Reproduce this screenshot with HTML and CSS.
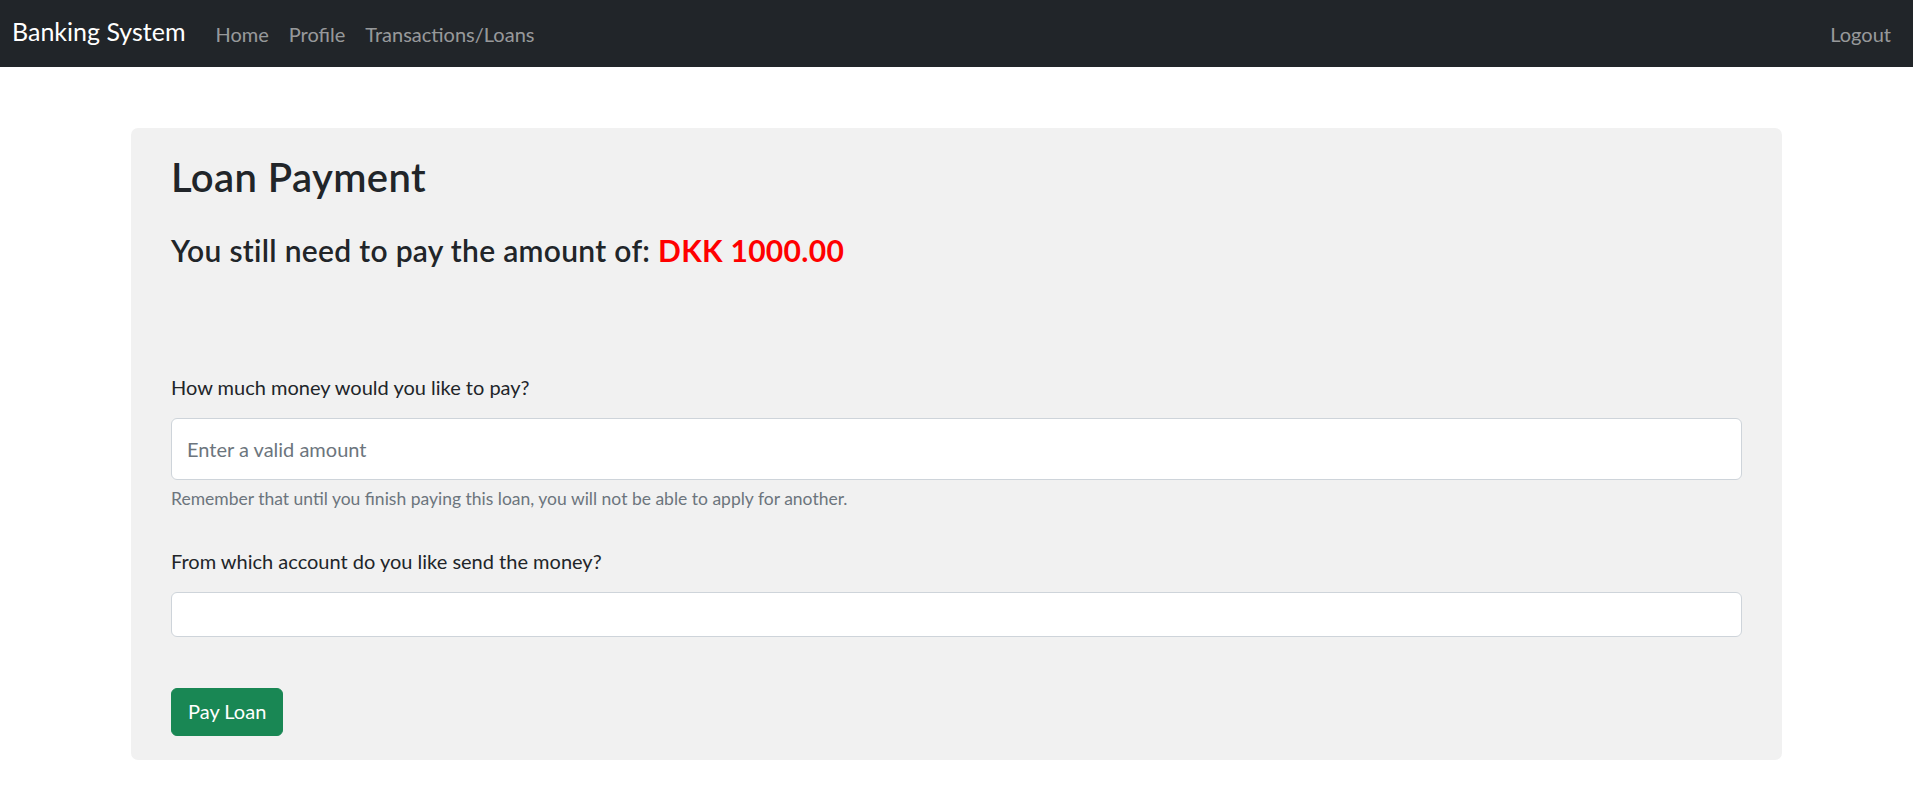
FILE: index.html
```html
<!DOCTYPE html>
<html lang="en">
<head>
<meta charset="utf-8">
<title>Loan Payment</title>
<link rel="stylesheet" href="styles.css">
</head>
<body>
<nav class="navbar">
  <a class="brand" href="#">Banking System</a>
  <div class="nav-links">
    <a class="nav-link" href="#">Home</a>
    <a class="nav-link" href="#">Profile</a>
    <a class="nav-link" href="#">Transactions/Loans</a>
  </div>
  <a class="nav-link logout" href="#">Logout</a>
</nav>
<main class="container">
  <section class="card">
    <h2 class="title">Loan Payment</h2>
    <h4 class="subtitle">You still need to pay the amount of: <span class="amount">DKK 1000.00</span></h4>
    <form class="form">
      <div class="group">
        <label class="label" for="amount">How much money would you like to pay?</label>
        <input class="control control-lg" id="amount" type="text" placeholder="Enter a valid amount">
        <div class="help">Remember that until you finish paying this loan, you will not be able to apply for another.</div>
      </div>
      <div class="group group-second">
        <label class="label" for="account">From which account do you like send the money?</label>
        <select class="control control-select" id="account"></select>
      </div>
      <button class="btn" type="button">Pay Loan</button>
    </form>
  </section>
</main>
</body>
</html>
```
FILE: styles.css
```css
* { box-sizing: border-box; }
body {
  margin: 0;
  font-family: "Lato", "Liberation Sans", sans-serif;
  font-size: 20px;
  line-height: 1.5;
  color: #212529;
  background: #fff;
}
a { text-decoration: none; }

.navbar {
  display: flex;
  align-items: center;
  height: 67px;
  padding: 0 12px;
  background: #212529;
}
.brand {
  color: #fff;
  font-size: 25px;
  line-height: 1.5;
  margin-right: 20px;
  padding-bottom: 3px;
}
.nav-links { display: flex; flex: 1; }
.nav-link {
  color: rgba(255, 255, 255, 0.55);
  font-size: 20px;
  padding: 0 10px;
}

.container {
  width: 1651px;
  margin: 61px auto 0;
}
.card {
  background: #f1f1f1;
  border-radius: 7px;
  padding: 25px 40px 24px;
}
.title {
  margin: 0;
  font-size: 40px;
  font-weight: 600;
  line-height: 1.2;
  letter-spacing: 0.4px;
}
.subtitle {
  margin: 31px 0 0;
  font-size: 30px;
  font-weight: 600;
  line-height: 1.2;
  letter-spacing: 0.3px;
}
.amount { color: #ff0000; font-weight: 700; }

.form { margin-top: 104px; display: flex; flex-direction: column; align-items: flex-start; }
.group { width: 100%; }
.group-second { margin-top: 34px; }
.label {
  display: block;
  margin-bottom: 16px;
  font-size: 20px;
  line-height: 1.5;
}
.control {
  display: block;
  width: 100%;
  font-family: inherit;
  font-size: 20px;
  color: #212529;
  background: #fff;
  border: 1px solid #ced4da;
  border-radius: 6px;
  padding: 0 15px;
  outline: none;
}
.control::placeholder { color: #6c757d; }
.control-lg { height: 62px; }
.control-select { height: 45px; appearance: none; -webkit-appearance: none; }
.help {
  margin-top: 6px;
  font-size: 17.5px;
  line-height: 1.5;
  color: #6c757d;
}
.btn {
  margin-top: 51px;
  height: 48px;
  padding: 0 16px 2px;
  font-family: inherit;
  font-size: 20px;
  color: #fff;
  background: #198754;
  border: 1px solid #198754;
  border-radius: 6px;
  cursor: pointer;
}
```
